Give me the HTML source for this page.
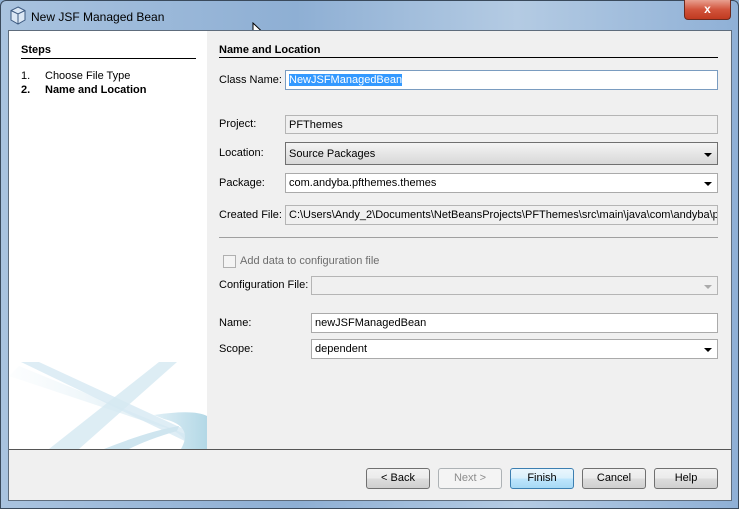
<!DOCTYPE html>
<html><head><style>
*{margin:0;padding:0;box-sizing:border-box}
body{width:739px;height:509px;position:relative;overflow:hidden;font-family:"Liberation Sans",Tahoma,sans-serif;font-size:11px;color:#000;background:#8fb0d3}
.a{position:absolute}
.frame{left:0;top:0;width:739px;height:509px;background:linear-gradient(90deg,#a9c3df,#8eafd4 40%,#b4cbe3 70%,#8fb0d6);border:1px solid #3a4a5c;border-radius:6px 6px 0 0}
.content{left:8px;top:30px;width:724px;height:471px;background:#f0f0f0;border:1px solid #5e6c7c}
.left{left:9px;top:31px;width:198px;height:418px;background:#fff;overflow:hidden}
.lbl{position:absolute;font-size:11px;line-height:13px}
.field{position:absolute;height:20px;border:1px solid #aaa;background:#fff;padding:3px 0 0 3px;font-size:11px;line-height:13px;white-space:nowrap;overflow:hidden}
.dis{background:#f0f0f0;border-color:#b5b5b5}
.arrow{position:absolute;right:5px;top:8px;width:0;height:0;border-left:4px solid transparent;border-right:4px solid transparent;border-top:4px solid #000}
.btn{position:absolute;top:468px;width:64px;height:21px;border:1px solid #707070;border-radius:3px;background:linear-gradient(#f2f2f2,#ebebeb 50%,#dddddd 51%,#cfcfcf);text-align:center;font-size:11px;line-height:19px}
</style></head><body>
<div class="a frame"></div>
<svg class="a" style="left:9px;top:6px" width="18" height="19" viewBox="0 0 18 19"><path d="M9 1 L16 4.5 L16 14 L9 18 L2 14 L2 4.5 Z" fill="#dce8f5" stroke="#3d5a80"/><path d="M2 4.5 L9 8 L16 4.5 M9 8 L9 18" fill="none" stroke="#3d5a80"/></svg>
<div class="lbl" style="left:31px;top:10px;font-size:12px;line-height:15px">New JSF Managed Bean</div>
<div class="a" style="left:684px;top:0;width:47px;height:20px;background:linear-gradient(#e8a090,#d2543c 50%,#c03a20);border:1px solid #6d2a1e;border-top:none;border-radius:0 0 4px 4px;color:#fff;font-weight:bold;text-align:center;font-size:12px;line-height:18px">x</div>
<svg class="a" style="left:252px;top:22px" width="14" height="20" viewBox="0 0 14 20"><path d="M1 1 L1 15 L4.5 11.5 L7 17 L9 16 L6.5 10.5 L11 10.5 Z" fill="#fff" stroke="#000" stroke-width="1"/></svg>
<div class="a content"></div>
<div class="a left">
<svg width="198" height="418" style="position:absolute;left:0;top:0">
<defs>
<linearGradient id="g" x1="0" x2="1"><stop offset="0" stop-color="#e4f1f7" stop-opacity="0.1"/><stop offset="1" stop-color="#cfe5ef"/></linearGradient>
<linearGradient id="b" x1="0" x2="1"><stop offset="0" stop-color="#e0eff6"/><stop offset="1" stop-color="#b3d8e6"/></linearGradient>
</defs>
<path d="M0 345 Q90 375 150 395 Q175 400 180 418 L198 418 L198 412 Q120 380 10 335 Z" fill="url(#g)"/>
<path d="M12 331 L30 331 L190 405 L180 412 Z" fill="#d6e9f2" opacity="0.8"/>
<path d="M40 418 L150 331 L168 331 L70 418 Z" fill="#d5e8f1" opacity="0.8"/>
<path d="M145 384 Q185 378 198 385 L198 418 L172 418 Q185 395 155 388 Z" fill="url(#b)"/>
<path d="M95 418 Q140 400 170 395 L168 400 Q140 408 120 418 Z" fill="#cfe5ef"/>
</svg>
</div>
<div class="lbl" style="left:21px;top:44px;font-weight:bold">Steps</div>
<div class="a" style="left:21px;top:58px;width:175px;height:1px;background:#000"></div>
<div class="lbl" style="left:21px;top:70px">1.</div>
<div class="lbl" style="left:45px;top:70px">Choose File Type</div>
<div class="lbl" style="left:21px;top:84px;font-weight:bold">2.</div>
<div class="lbl" style="left:45px;top:84px;font-weight:bold">Name and Location</div>
<div class="lbl" style="left:219px;top:44px;font-weight:bold">Name and Location</div>
<div class="a" style="left:219px;top:57px;width:499px;height:1px;background:#000"></div>
<div class="lbl" style="left:219px;top:74px">Class Name:</div>
<div class="field" style="left:285px;top:70px;width:433px;border-color:#7a9cc0"><span style="background:#3399ff;color:#fff">NewJSFManagedBean</span></div>
<div class="lbl" style="left:219px;top:118px">Project:</div>
<div class="field dis" style="left:285px;top:115px;width:433px;height:19px">PFThemes</div>
<div class="lbl" style="left:219px;top:147px">Location:</div>
<div class="field" style="left:285px;top:142px;width:433px;height:23px;background:linear-gradient(#f4f4f4,#e6e6e6 50%,#d8d8d8);border-color:#707070;padding-top:5px">Source Packages<div class="arrow" style="top:10px"></div></div>
<div class="lbl" style="left:219px;top:177px">Package:</div>
<div class="field" style="left:285px;top:173px;width:433px">com.andyba.pfthemes.themes<div class="arrow"></div></div>
<div class="lbl" style="left:219px;top:209px">Created File:</div>
<div class="field dis" style="left:285px;top:205px;width:433px">C:\Users\Andy_2\Documents\NetBeansProjects\PFThemes\src\main\java\com\andyba\pfthemes\themes\NewJSFManagedBean.java</div>
<div class="a" style="left:219px;top:237px;width:499px;height:1px;background:#a0a0a0"></div>
<div class="a" style="left:223px;top:255px;width:13px;height:13px;border:1px solid #b0b0b0;background:#f4f4f4"></div>
<div class="lbl" style="left:240px;top:255px;color:#6d6d6d">Add data to configuration file</div>
<div class="lbl" style="left:219px;top:279px">Configuration File:</div>
<div class="field dis" style="left:311px;top:276px;width:407px;height:19px"><div class="arrow" style="border-top-color:#aaa"></div></div>
<div class="lbl" style="left:219px;top:317px">Name:</div>
<div class="field" style="left:311px;top:313px;width:407px">newJSFManagedBean</div>
<div class="lbl" style="left:219px;top:343px">Scope:</div>
<div class="field" style="left:311px;top:339px;width:407px">dependent<div class="arrow"></div></div>
<div class="a" style="left:9px;top:449px;width:722px;height:1px;background:#555"></div>
<div class="btn" style="left:366px">&lt; Back</div>
<div class="btn" style="left:438px;color:#8d8d8d;border-color:#adb2b5;background:#f4f4f4">Next &gt;</div>
<div class="btn" style="left:510px;border-color:#3c7fb1;background:linear-gradient(#eaf6fd,#d9f0fc 50%,#bee6fd 51%,#a7d9f5)">Finish</div>
<div class="btn" style="left:582px">Cancel</div>
<div class="btn" style="left:654px">Help</div>
</body></html>
